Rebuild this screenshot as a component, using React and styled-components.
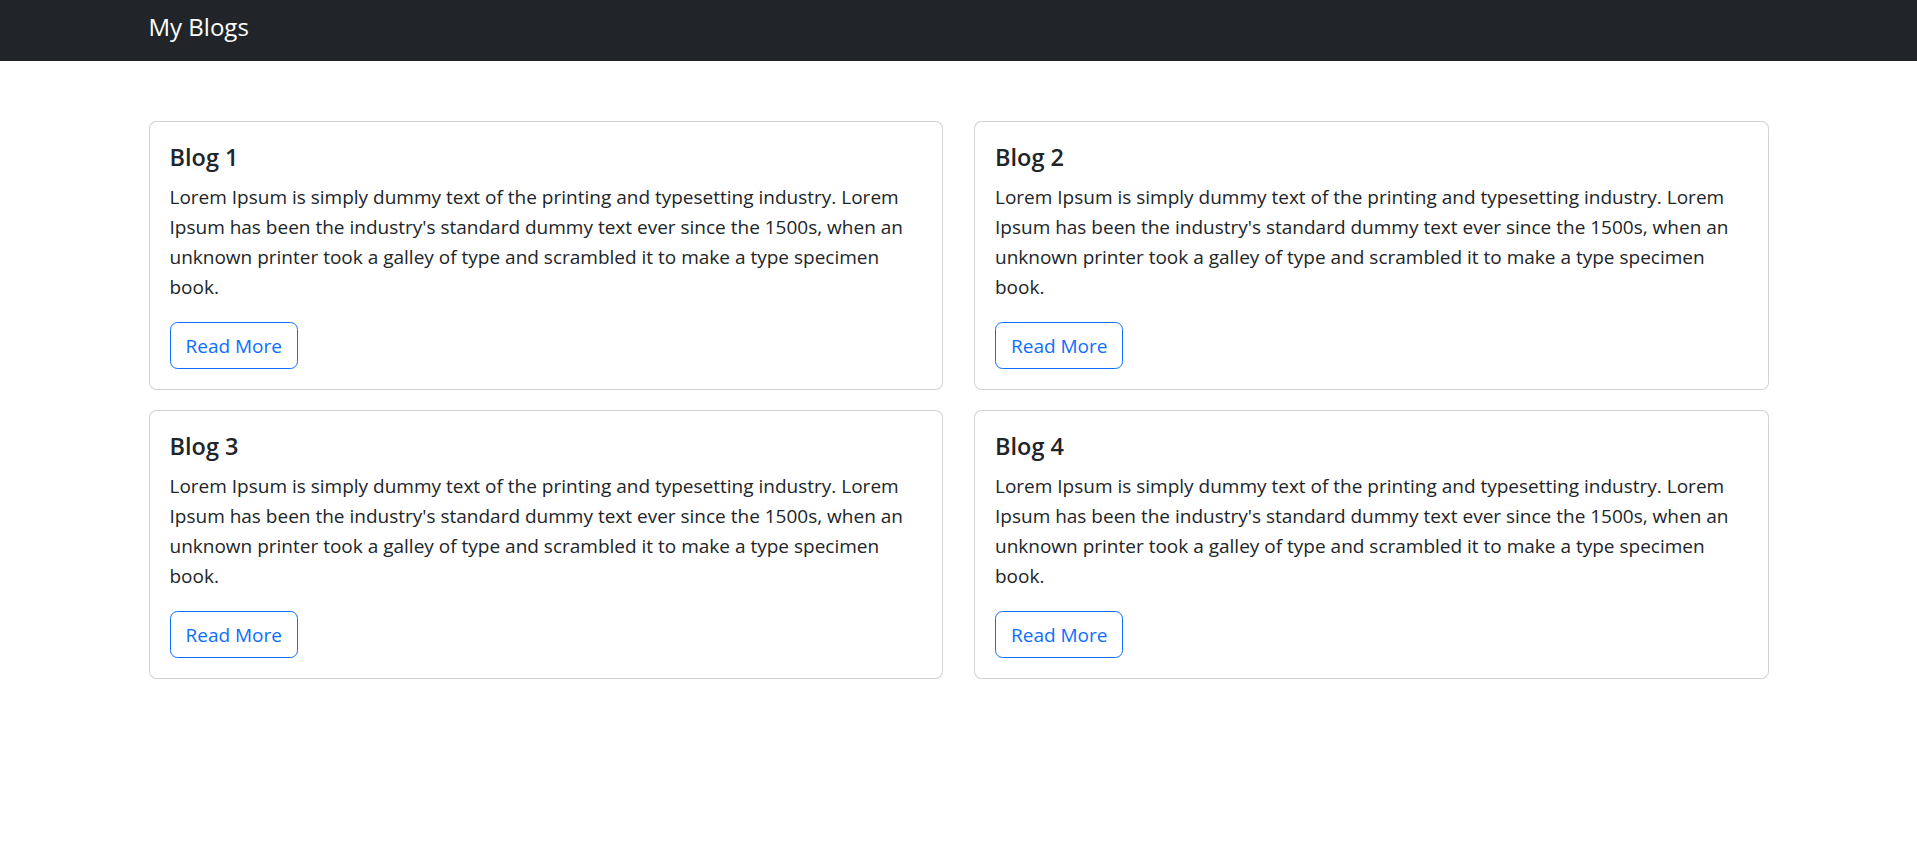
import React from "react";
import styled, { createGlobalStyle } from "styled-components";

const Global = createGlobalStyle`
  html, body { margin: 0; padding: 0; background: #fff; }
  body {
    font-family: "Open Sans", "Noto Sans", "Liberation Sans", sans-serif;
    color: #212529;
    -webkit-font-smoothing: antialiased;
  }
  * { box-sizing: border-box; }
`;

const NavBar = styled.nav`
  background: #212529;
  height: 61px;
`;

const Container = styled.div`
  width: 1650px;
  margin: 0 auto;
  padding: 0 15px;
`;

const Brand = styled.a`
  display: inline-block;
  padding-top: 8px;
  font-size: 24px;
  line-height: 37.5px;
  color: #fff;
  text-decoration: none;
`;

const Main = styled(Container)`
  padding-top: 60px;
`;

const Grid = styled.div`
  display: grid;
  grid-template-columns: 1fr 1fr;
  column-gap: 31px;
  row-gap: 20px;
`;

const Card = styled.div`
  border: 1px solid rgba(0, 0, 0, 0.175);
  border-radius: 7.5px;
  background: #fff;
  padding: 20px;
`;

const Title = styled.h5`
  margin: 0 0 10px;
  font-size: 23.5px;
  font-weight: 600;
  line-height: 30px;
  color: #212529;
`;

const Text = styled.p`
  margin: 0 0 20px;
  font-size: 19px;
  line-height: 30px;
  color: #212529;
`;

const OutlineButton = styled.button`
  font-family: inherit;
  font-size: 19px;
  line-height: 30px;
  padding: 7.5px 15px;
  border: 1px solid #0d6efd;
  border-radius: 7.5px;
  background: transparent;
  color: #0d6efd;
  cursor: pointer;
`;

const LOREM =
  "Lorem Ipsum is simply dummy text of the printing and typesetting industry. Lorem Ipsum has been the industry's standard dummy text ever since the 1500s, when an unknown printer took a galley of type and scrambled it to make a type specimen book.";

const blogs = [1, 2, 3, 4].map((n) => ({ id: n, title: `Blog ${n}`, body: LOREM }));

export default function App() {
  return (
    <>
      <Global />
      <NavBar>
        <Container>
          <Brand href="#">My Blogs</Brand>
        </Container>
      </NavBar>
      <Main>
        <Grid>
          {blogs.map((b) => (
            <Card key={b.id}>
              <Title>{b.title}</Title>
              <Text>{b.body}</Text>
              <OutlineButton>Read More</OutlineButton>
            </Card>
          ))}
        </Grid>
      </Main>
    </>
  );
}
